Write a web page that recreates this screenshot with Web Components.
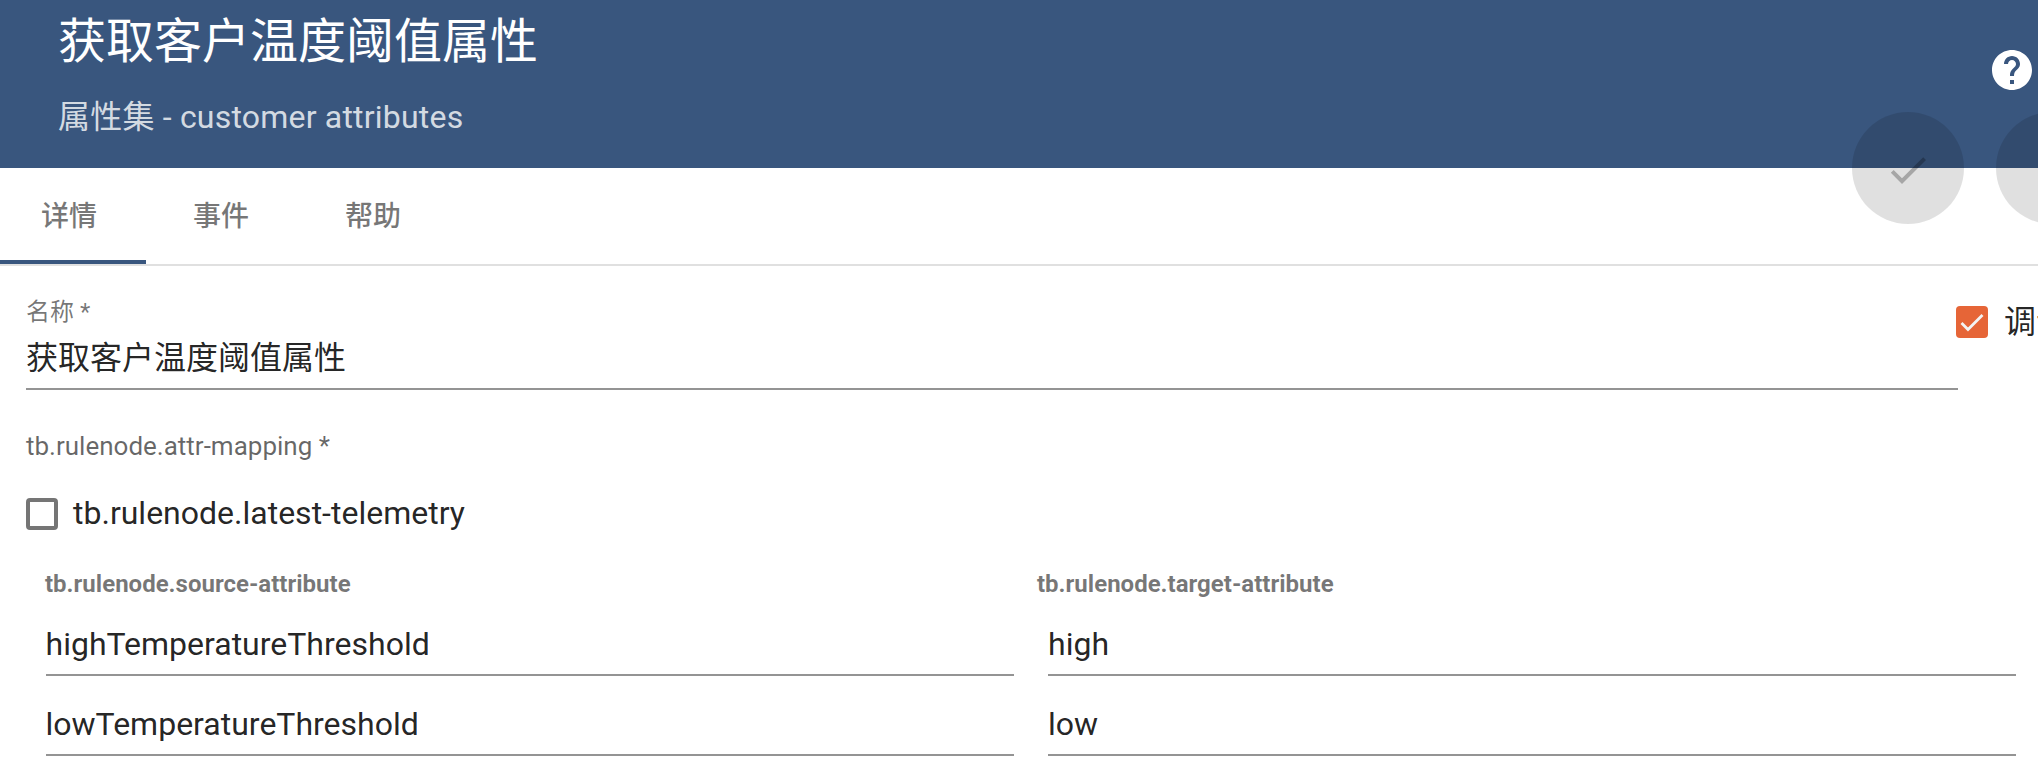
<!DOCTYPE html>
<html lang="zh"><head><meta charset="utf-8"><title>获取客户温度阈值属性</title>
<style>
html,body{margin:0;padding:0;background:#fff;overflow:hidden}
body{font-family:Roboto,"Noto Sans CJK SC",sans-serif}
</style></head><body>
<tb-app>
  <tb-header heading="获取客户温度阈值属性" sub="属性集 - customer attributes"></tb-header>
  <tb-tabs></tb-tabs>
  <tb-form>
    <tb-name-row label="名称 *" value="获取客户温度阈值属性" debug="调试模式"></tb-name-row>
    <tb-mapping label="tb.rulenode.attr-mapping *" check="tb.rulenode.latest-telemetry">
      <tb-kv k="highTemperatureThreshold" v="high"></tb-kv>
      <tb-kv k="lowTemperatureThreshold" v="low"></tb-kv>
    </tb-mapping>
  </tb-form>
  <tb-fab style="--x:1852px"></tb-fab>
  <tb-fab style="--x:1996px" kind="close"></tb-fab>
</tb-app>
<script>
const FONT='font-family:Roboto,"Noto Sans CJK SC",sans-serif;';
function def(name,css,html){
  customElements.define(name,class extends HTMLElement{
    connectedCallback(){
      if(this.shadowRoot)return;
      const r=this.attachShadow({mode:'open'});
      const a=n=>this.getAttribute(n)||'';
      r.innerHTML='<style>'+css+'</style>'+html(a);
    }
  });
}
const CHECK='M9 16.17L4.83 12l-1.41 1.41L9 19 21 7l-1.41-1.41z';
const CLOSE='M19 6.41L17.59 5 12 10.59 6.41 5 5 6.41 10.59 12 5 17.59 6.41 19 12 13.41 17.59 19 19 17.59 13.41 12z';
def('tb-app',':host{display:block;position:relative;width:2038px;height:764px;overflow:hidden;background:#fff;'+FONT+'}',()=>'<slot></slot>');
def('tb-header',`:host{display:flex;height:168px;background:#39567e;color:#fff;box-sizing:border-box;padding-left:58px}
.t{flex:1;min-width:0}
h1{margin:0;padding-top:13px;font-size:48px;line-height:58px;font-weight:400}
p{margin:0;padding-top:32px;font-size:32px;line-height:28px;font-weight:400;letter-spacing:.2px;color:rgba(255,255,255,.8)}
svg{width:48px;height:48px;margin:46px 2px 0 0;fill:#fff;flex:none}`,
a=>`<div class="t"><h1>${a('heading')}</h1><p>${a('sub')}</p></div>
<svg viewBox="0 0 24 24"><path d="M12 2C6.48 2 2 6.48 2 12s4.48 10 10 10 10-4.48 10-10S17.52 2 12 2zm1 17h-2v-2h2v2zm2.07-7.75l-.9.92C13.45 12.9 13 13.5 13 15h-2v-.5c0-1.1.45-2.1 1.17-2.83l1.24-1.26c.37-.36.59-.86.59-1.41 0-1.1-.9-2-2-2s-2 .9-2 2H8c0-2.21 1.79-4 4-4s4 1.79 4 4c0 .88-.36 1.68-.93 2.25z"/></svg>`);
def('tb-tabs',`:host{display:flex;height:98px;box-sizing:border-box;border-bottom:2px solid #e0e0e0;overflow:hidden}
.s{display:flex;margin-left:-6px}
.tab{width:152px;height:96px;box-sizing:border-box;display:flex;align-items:center;justify-content:center;padding-right:2px;font-size:28px;font-weight:500;color:rgba(0,0,0,.54);border-bottom:4px solid transparent}
.on{border-bottom-color:#39567e}`,
()=>`<div class="s"><div class="tab on">详情</div><div class="tab">事件</div><div class="tab">帮助</div></div>`);
def('tb-form',':host{display:block;padding:31px 0 0 26px}',()=>'<slot></slot>');
def('tb-name-row',`:host{display:flex;align-items:flex-start}
.f{width:1932px;flex:none;border-bottom:2px solid #949494;padding-bottom:10px}
.l{font-size:24px;line-height:28px;padding-top:1px;color:rgba(0,0,0,.54);height:40px}
.v{font-size:32px;line-height:40px;color:rgba(0,0,0,.87);height:40px}
.d{display:flex;flex:none;margin:9px 0 0 -2px;white-space:nowrap;font-size:32px;line-height:32px;color:rgba(0,0,0,.87);gap:16px}
.b{width:32px;height:32px;border-radius:4px;background:#e66537;flex:none}
svg{display:block;width:32px;height:32px}`,
a=>`<div class="f"><div class="l">${a('label')}</div><div class="v">${a('value')}</div></div>
<div class="d"><span class="b"><svg viewBox="0 0 32 32"><path d="M5.5 17l6.5 6.5L26.5 9" fill="none" stroke="#f3f3f3" stroke-width="2.8"/></svg></span><span>${a('debug')}</span></div>`);
def('tb-mapping',`:host{display:block;margin-top:42px}
.l{font-size:26px;line-height:28px;color:rgba(0,0,0,.6)}
.c{display:flex;align-items:center;gap:15px;margin-top:38px;height:32px;font-size:32px;color:rgba(0,0,0,.87)}
.c span:last-child{padding-bottom:2px}
.b{width:32px;height:32px;box-sizing:border-box;border:4px solid rgba(0,0,0,.54);border-radius:4px;flex:none}
.h{display:grid;grid-template-columns:992px 1fr;margin-top:40px;font-size:24px;line-height:28px;font-weight:700;color:rgba(0,0,0,.54);padding-left:19px;margin-bottom:26px}`,
a=>`<div class="l">${a('label')}</div><div class="c"><span class="b"></span><span>${a('check')}</span></div>
<div class="h"><span>tb.rulenode.source-attribute</span><span>tb.rulenode.target-attribute</span></div><slot></slot>`);
def('tb-kv',`:host{display:grid;grid-template-columns:968px 968px;column-gap:34.5px;padding-left:19.5px;margin-bottom:28px}
div{font-size:32px;line-height:40px;padding-bottom:10px;border-bottom:2px solid #949494;color:rgba(0,0,0,.87)}`,
a=>`<div>${a('k')}</div><div>${a('v')}</div>`);
def('tb-fab',`:host{position:absolute;left:var(--x);top:112px;width:112px;height:112px;border-radius:50%;background:rgba(0,0,0,.12);display:flex;align-items:center;justify-content:center}
svg{width:48px;height:48px;fill:rgba(0,0,0,.26);margin-top:4px}`,
a=>`<svg viewBox="0 0 24 24"><path d="${a('kind')==='close'?CLOSE:CHECK}"/></svg>`);
</script>
</body></html>
